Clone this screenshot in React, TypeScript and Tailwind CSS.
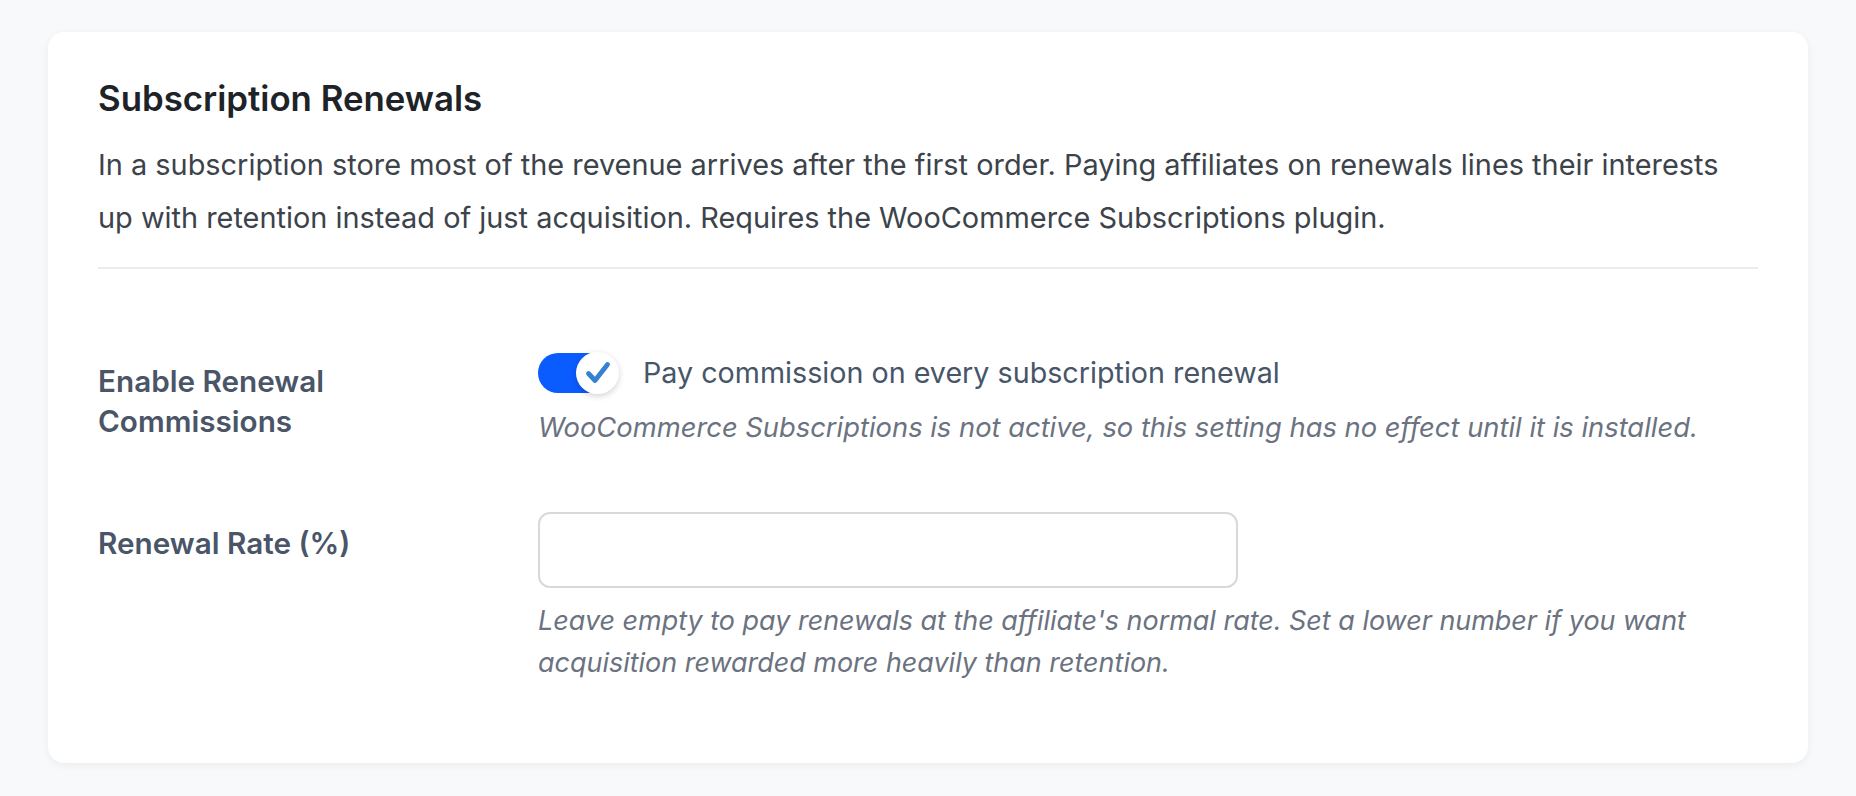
import React from "react";

function Check() {
  return (
    <svg width="28" height="26" viewBox="0 0 28 26" fill="none">
      <path d="M4.5 13.5 L11 20.5 L23.5 4.5" stroke="#3583d0" strokeWidth="4.8" strokeLinecap="round" strokeLinejoin="round" />
    </svg>
  );
}

export default function App() {
  return (
    <div className="min-h-screen bg-[#f8f9fb] px-[48px] pt-[32px] pb-[34px]" style={{ fontFamily: "Inter, 'Noto Sans', sans-serif" }}>
      <div className="rounded-[16px] bg-white shadow-[0_2px_8px_rgba(0,0,0,0.06)] px-[50px] pt-[44px] pb-[80px]">
        <h2 className="text-[34.8px] leading-[44px] font-semibold text-[#1d2327]">Subscription Renewals</h2>
        <p className="mt-[18px] text-[28.9px] leading-[53px] text-[#3c434a]">
          In a subscription store most of the revenue arrives after the first order. Paying affiliates on renewals lines their interests
          <br />
          up with retention instead of just acquisition. Requires the WooCommerce Subscriptions plugin.
        </p>
        <div className="mt-[23px] h-[2px] bg-[#ececee]" />

        <div className="mt-[83px] grid grid-cols-[440px_1fr] gap-y-[63px]">
          <div className="pt-[9px] text-[29.7px] leading-[40px] font-semibold text-[#4a5568]">
            Enable Renewal
            <br />
            Commissions
          </div>
          <div>
            <div className="flex items-center">
              <div className="relative h-[42px] w-[82px]">
                <div className="absolute left-0 top-[1px] h-[40px] w-[74px] rounded-full bg-[#0b5cff]" />
                <div className="absolute left-[38px] top-0 flex h-[42px] w-[43px] items-center justify-center rounded-full bg-white shadow-[0_2px_6px_rgba(0,0,0,0.18)]">
                  <Check />
                </div>
              </div>
              <span className="ml-[23px] text-[28.7px] leading-[42px] text-[#475569]">Pay commission on every subscription renewal</span>
            </div>
            <p className="mt-[13px] text-[27.35px] leading-[42px] italic text-[#6b7280]">
              WooCommerce Subscriptions is not active, so this setting has no effect until it is installed.
            </p>
          </div>

          <div className="pt-[11px] text-[29.7px] leading-[40px] font-semibold text-[#4a5568]">Renewal Rate (%)</div>
          <div>
            <input
              type="text"
              className="block h-[76px] w-[700px] rounded-[12px] border-2 border-[#d7d9dc] bg-white outline-none"
            />
            <p className="mt-[12px] text-[26.95px] leading-[41.5px] italic text-[#6b7280]">
              Leave empty to pay renewals at the affiliate's normal rate. Set a lower number if you want
              <br />
              acquisition rewarded more heavily than retention.
            </p>
          </div>
        </div>
      </div>
    </div>
  );
}
